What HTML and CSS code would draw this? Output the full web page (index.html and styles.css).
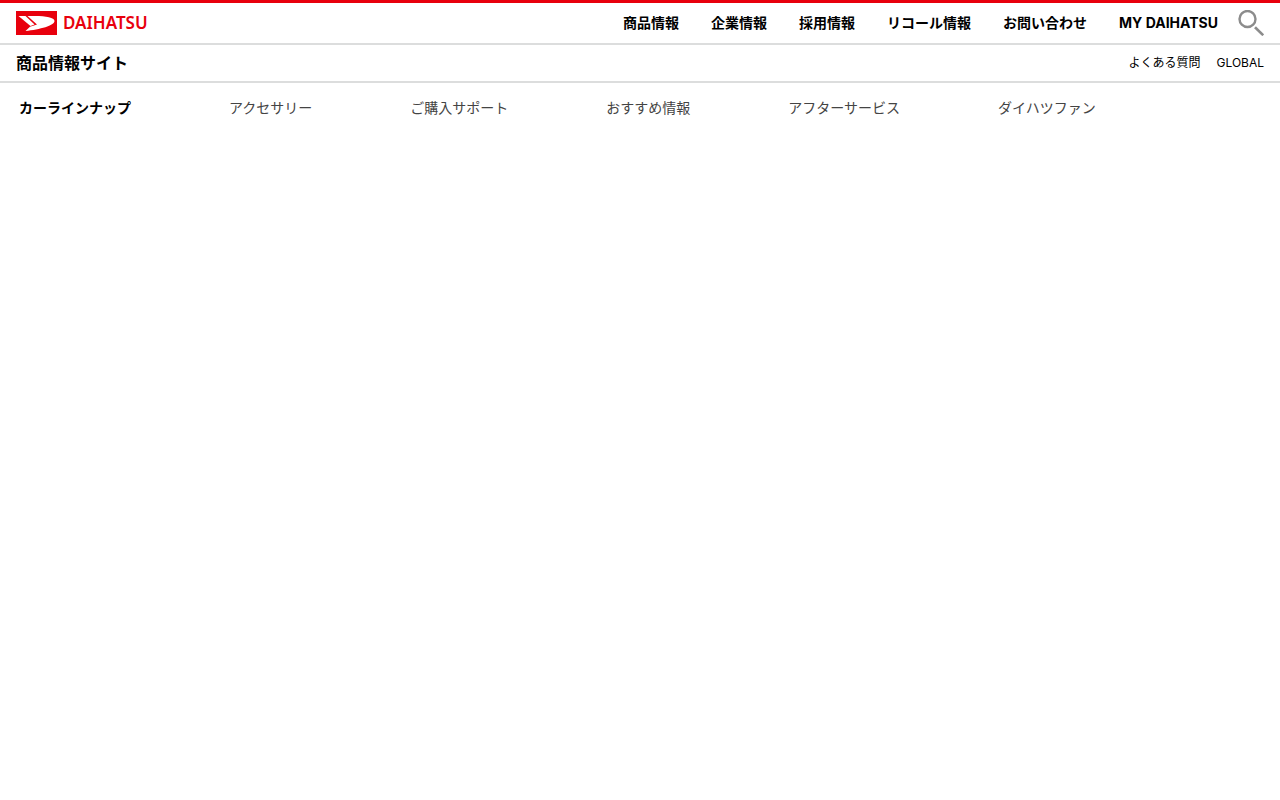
FILE: index.html
```html
<!DOCTYPE html>
<html lang="ja">
<head>
  <meta charset="UTF-8" />
  <meta name="viewport" content="width=device-width, initial-scale=1.0" />
  <title>商品情報サイト | DAIHATSU</title>
  <link rel="stylesheet" href="styles.css">
</head>
<body>

  <header>
    <!-- グローバルヘッダー -->
    <div class="global-header">
      <a class="logo" href="#">
        <svg class="logo-mark" viewBox="0 0 41 24" aria-hidden="true">
          <rect width="41" height="24" fill="#e8000d"/>
          <path d="M2.500 5H9.500L18.500 13.500L14.500 15L2.500 5Z" fill="#fff"/>
          <path d="M11.500 5H19C30 5 38.500 6.500 38.500 10C38.500 14.500 24 18.500 9.500 20L14 15.800L21 13.500Z" fill="#fff"/>
        </svg>
        <span class="logo-text">DAIHATSU</span>
      </a>
      <nav class="global-nav" aria-label="グローバル">
        <a href="#">商品情報</a>
        <a href="#">企業情報</a>
        <a href="#">採用情報</a>
        <a href="#">リコール情報</a>
        <a href="#">お問い合わせ</a>
        <a href="#">MY DAIHATSU</a>
      </nav>
      <button class="search-btn" type="button" aria-label="検索">
        <svg viewBox="0 0 26 26" fill="none" stroke="#8c8c8c" aria-hidden="true">
          <circle cx="9.500" cy="9" r="8" stroke-width="2.400"/>
          <path d="M17 17.200L25.200 25.200" stroke-width="2.600"/>
        </svg>
      </button>
    </div>

    <!-- サイト名 -->
    <div class="site-header">
      <a class="site-title" href="#">商品情報サイト</a>
      <div class="sub-links">
        <a href="#">よくある質問</a>
        <a href="#">GLOBAL</a>
      </div>
    </div>

    <!-- 商品情報メニュー -->
    <nav class="site-nav" aria-label="商品情報">
      <a class="current" href="#">カーラインナップ</a>
      <a href="#">アクセサリー</a>
      <a href="#">ご購入サポート</a>
      <a href="#">おすすめ情報</a>
      <a href="#">アフターサービス</a>
      <a href="#">ダイハツファン</a>
    </nav>
  </header>

</body>
</html>
```

FILE: styles.css
```css
* {
  box-sizing: border-box;
}

body {
  margin: 0;
  background-color: #fff;
  color: #000;
  font-family: Inter, "Noto Sans CJK JP", sans-serif;
  font-size: 14px;
  line-height: 20px;
}

a {
  color: inherit;
  text-decoration: none;
  white-space: nowrap;
}

.global-header {
  display: flex;
  align-items: center;
  padding: 6px 16px;
  border-top: 3px solid #e8000d;
  border-bottom: 2px solid #dcdddd;
}

.logo {
  display: flex;
  align-items: center;
  gap: 6px;
  margin-right: auto;
}

.logo-mark {
  width: 41px;
  height: 24px;
}

.logo-text {
  color: #e8000d;
  font-family: "Noto Sans", sans-serif;
  font-size: 17px;
  font-weight: 600;
}

.global-nav {
  display: flex;
  gap: 32px;
  font-weight: 700;
}

.search-btn {
  width: 26px;
  height: 28px;
  margin-left: 20px;
  padding: 0;
  border: none;
  background: none;
  cursor: pointer;
}

.search-btn svg {
  display: block;
  width: 26px;
  height: 26px;
}

.site-header {
  display: flex;
  justify-content: space-between;
  align-items: center;
  padding: 6px 16px;
  border-bottom: 2px solid #dcdddd;
}

.site-title {
  font-size: 16px;
  line-height: 24px;
  font-weight: 700;
}

.sub-links {
  display: flex;
  gap: 16px;
  font-size: 12px;
}

.site-nav {
  display: flex;
  gap: 98px;
  padding: 15px 19px;
  color: #444;
}

.site-nav .current {
  color: #000;
  font-weight: 700;
}
```
